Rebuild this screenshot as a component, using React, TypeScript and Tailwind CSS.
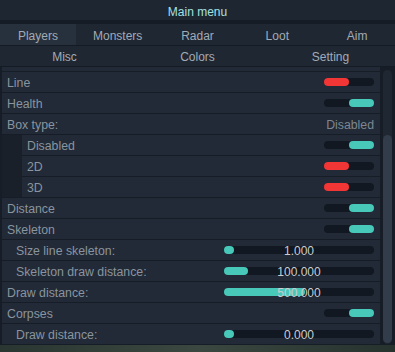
const Toggle = ({ on }: { on: boolean }) => (
  <div className={`w-[50px] h-[8px] rounded-full bg-[#121821] flex ${on ? "justify-end" : "justify-start"}`}>
    <div className={`w-[25px] h-full rounded-full ${on ? "bg-[#47c8b9]" : "bg-[#f23636]"}`} />
  </div>
);

const Slider = ({ fill, value }: { fill: number; value: string }) => (
  <div className="relative w-[150px] h-[8px] rounded-full bg-[#121821]">
    <div className="h-full rounded-full bg-[#47c8b9]" style={{ width: fill }} />
    <span className="absolute inset-0 pt-px flex items-center justify-center text-[12px] text-[#c9cdd2] leading-none">
      {value}
    </span>
  </div>
);

type Row = {
  label: string;
  sub?: boolean;
  toggle?: boolean;
  slider?: [number, string];
  text?: string;
};

const Item = ({ row }: { row: Row }) => (
  <div className={`h-[20px] bg-[#212a36] flex items-center justify-between pr-[6px] ${row.sub ? "pl-[14px]" : "pl-[5px]"}`}>
    <span className="text-[#8a949f] pt-[2px] text-[12.3px]">{row.label}</span>
    {row.toggle !== undefined && <Toggle on={row.toggle} />}
    {row.slider && <Slider fill={row.slider[0]} value={row.slider[1]} />}
    {row.text && <span className="text-[#7d8791] pt-[2px] text-[12.3px]">{row.text}</span>}
  </div>
);

const TOP: Row[] = [
  { label: "Line", toggle: false },
  { label: "Health", toggle: true },
  { label: "Box type:", text: "Disabled" },
];

const BOX: Row[] = [
  { label: "Disabled", toggle: true },
  { label: "2D", toggle: false },
  { label: "3D", toggle: false },
];

const REST: Row[] = [
  { label: "Distance", toggle: true },
  { label: "Skeleton", toggle: true },
  { label: "Size line skeleton:", sub: true, slider: [10, "1.000"] },
  { label: "Skeleton draw distance:", sub: true, slider: [24, "100.000"] },
  { label: "Draw distance:", slider: [81, "500.000"] },
  { label: "Corpses", toggle: true },
  { label: "Draw distance:", sub: true, slider: [10, "0.000"] },
];

export default function App() {
  return (
    <div className="w-[395px] h-[352px] overflow-hidden bg-[#171d26] font-['Liberation_Sans',Arial,sans-serif] text-[12px] flex flex-col">
      {/* Title */}
      <div className="h-[20px] shrink-0 pt-[3px] bg-[#1e2631] flex items-center justify-center text-[#a3e2e2]">
        Main menu
      </div>
      <div className="h-[4px] shrink-0 bg-[#161c25]" />

      {/* Tabs */}
      <div className="h-[21px] shrink-0 grid grid-cols-5 gap-1 bg-[#1f2733] text-[#a2abb5]">
        {["Players", "Monsters", "Radar", "Loot", "Aim"].map((t, i) => (
          <div key={t} className={`pt-[2px] flex items-center justify-center ${i === 0 ? "bg-[#27313d]" : ""}`}>
            {t}
          </div>
        ))}
      </div>
      <div className="h-px shrink-0 bg-[#151b24]" />
      <div className="h-[20px] shrink-0 grid grid-cols-3 gap-1 bg-[#1f2733] text-[#a2abb5]">
        {["Misc", "Colors", "Setting"].map((t) => (
          <div key={t} className="pt-[2px] flex items-center justify-center">
            {t}
          </div>
        ))}
      </div>
      <div className="h-px shrink-0 bg-[#151b24]" />

      {/* Content */}
      <div className="h-[278px] shrink-0 flex pl-[2px]">
        <div className="w-[378px] flex flex-col gap-px">
          <div className="h-[4px] bg-[#212a36]" />
          {TOP.map((r) => (
            <Item key={r.label} row={r} />
          ))}
          <div className="flex">
            <div className="w-[20px] bg-[#19202a]" />
            <div className="flex-1 flex flex-col gap-px">
              {BOX.map((r) => (
                <Item key={r.label} row={r} />
              ))}
            </div>
          </div>
          {REST.map((r, i) => (
            <Item key={i} row={r} />
          ))}
        </div>
        <div className="ml-[3px] mt-[3px] mb-[1px] w-[9px] rounded-full bg-[#1f2733] flex flex-col justify-end">
          <div className="h-[208px] rounded-full bg-[#323c4a] mb-[1px]" />
        </div>
      </div>

      {/* Game backdrop */}
      <div className="flex-1 bg-gradient-to-r from-[#2a3631] via-[#3b4841] to-[#26322e]" />
    </div>
  );
}
